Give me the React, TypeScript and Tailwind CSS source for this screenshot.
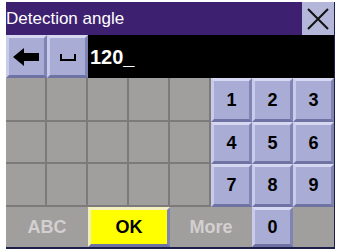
import type { ReactNode } from 'react'

const FONT = { fontFamily: '"Liberation Sans", Arial, sans-serif' }

// raised lavender key with bevelled edges
function Key({ children, className = '' }: { children?: ReactNode; className?: string }) {
  return (
    <div
      className={`flex items-center justify-center border-[3px] border-t-[#d6d8f2] border-l-[#c9cbea] border-b-[#6f73a3] border-r-[#8084b3] bg-[#a9acd4] text-[18px] font-bold text-black ${className}`}
    >
      {children}
    </div>
  )
}

function Cell({ className = '' }: { className?: string }) {
  return <div className={`border-r-2 border-b-2 border-[#7c7a7a] bg-[#a19e9e] ${className}`} />
}

export default function App() {
  const rows = [
    ['1', '2', '3'],
    ['4', '5', '6'],
    ['7', '8', '9'],
  ]

  return (
    <div className="w-[340px] h-[251px] bg-white pl-[6px] pt-[2px]" style={FONT}>
      <div className="w-[329px] border-r border-[#1c1f4a]">
        {/* Title bar */}
        <div className="flex h-[33px]">
          <div className="flex-1 bg-[#3d2070] flex items-center text-white text-[17px] leading-none">
            Detection angle
          </div>
          <div className="w-[32px] bg-[#b4b6da] flex items-center justify-center">
            <svg width="24" height="24" viewBox="0 0 24 24">
              <path d="M2 2 L22 22 M22 2 L2 22" stroke="#111" strokeWidth="2" />
            </svg>
          </div>
        </div>

        {/* Input row */}
        <div className="flex h-[43px] bg-black items-center">
          <Key className="w-[41px] h-[43px]">
            <svg width="27" height="18" viewBox="0 0 27 18">
              <path d="M0 9 L11 0 L11 5 L26 5 L26 13 L11 13 L11 18 Z" fill="#000" />
            </svg>
          </Key>
          <Key className="w-[41px] h-[43px]">
            <svg width="16" height="10" viewBox="0 0 16 10">
              <path d="M1 2 V8 H15 V2" stroke="#000" strokeWidth="2" fill="none" />
            </svg>
          </Key>
          <div className="pl-[2px] text-white text-[20px] font-bold">120_</div>
        </div>

        {/* Keypad */}
        <div className="grid grid-cols-8 grid-rows-[44px_42px_43px_40px]">
          {rows.map((r) => (
            <>
              <Cell />
              <Cell />
              <Cell />
              <Cell />
              <Cell />
              {r.map((n) => (
                <Key key={n}>{n}</Key>
              ))}
            </>
          ))}
          <div className="col-span-2 flex items-center justify-center bg-[#a19e9e] text-[#d2d0d0] text-[18px] font-bold">
            ABC
          </div>
          <Key className="col-span-2 bg-[#ffff00] border-t-[#f4f0c0] border-l-[#f0eebb]">OK</Key>
          <div className="col-span-2 flex items-center justify-center bg-[#a19e9e] text-[#d2d0d0] text-[18px] font-bold">
            More
          </div>
          <Key>0</Key>
          <div className="bg-[#a19e9e]" />
        </div>
        <div className="h-[2px] bg-[#1c1f4a]" />
      </div>
    </div>
  )
}
